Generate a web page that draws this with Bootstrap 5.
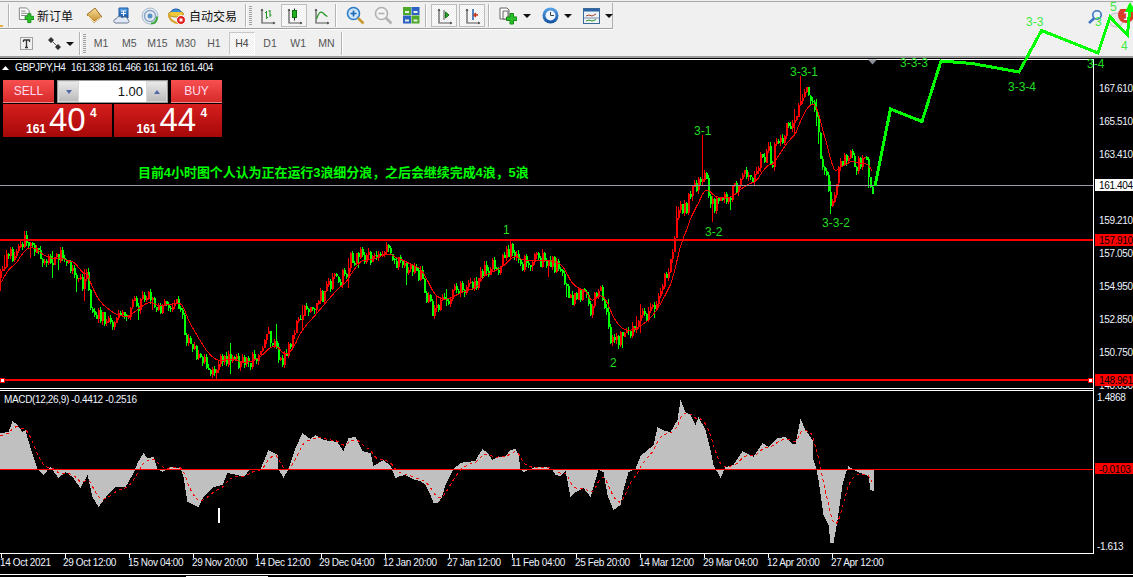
<!DOCTYPE html>
<html lang="zh">
<head>
<meta charset="utf-8">
<title>GBPJPY,H4</title>
<link href="https://cdn.jsdelivr.net/npm/bootstrap@5.3.0/dist/css/bootstrap.min.css" rel="stylesheet">
<style>
html,body{margin:0;width:1133px;height:577px;overflow:hidden;background:#f0f0f0;font-family:"Liberation Sans","Noto Sans CJK SC",sans-serif}
.mt-stage{width:1133px;height:577px;overflow:hidden}
.tb-one{height:29px;border-top:1px solid #a8a8a8;margin-top:1px;padding-top:1px}
.tb-one-in{width:613px;height:26px;border-bottom:1px solid #a0a0a0;border-right:1px solid #b0b0b0;box-shadow:0 1px 0 #fff}
.tb-two{height:28px;border-bottom:2px solid #9c9c9c;padding-top:1px}
.tb-sep{width:2px;height:23px;flex:none;background:#b4b4b4;border-right:1px solid #fff}
.tb-grip{width:3px;height:20px;flex:none;background:repeating-linear-gradient(#a0a0a0 0 1px,#f0f0f0 1px 2px);margin:0 1px 0 2px}
.tb-cell{height:25px;flex:none}
.w8{width:8px}.w28{width:28px}
.c-order{width:70px;padding-left:8px;gap:3px}
.c-auto{width:77px;gap:3px;padding-left:4px}
.c-t{width:47px;padding-left:6px}
.c-shape{width:32px;gap:4px}
.m-l2{margin-left:2px}.m-l3{margin-left:3px}
.c-indic{margin-left:9px;gap:6px}
.c-drop{margin-left:11px;gap:5px}
.c-right{width:46px;padding-top:6px;gap:5px}
.tb-on{width:26px;height:23px;flex:none;border:1px solid #c8c8c8;border-right-color:#fff;border-bottom-color:#fff;outline:1px solid #bdbdbd;outline-offset:-1px;background:repeating-conic-gradient(#fff 0 25%,#ececec 0 50%) 0 0/2px 2px}
.tb-txt{font-size:12px;color:#111;white-space:nowrap;font-family:"Noto Sans CJK SC",sans-serif;line-height:1}
.tb-caret{width:0;height:0;flex:none;border:4px solid transparent;border-top:4px solid #111;border-bottom:0}
.tf-cell{width:28.2px;height:26px;flex:none;font-size:10.5px;color:#555;text-align:center;line-height:24px}
.tf-on{width:26px;height:23px;flex:none;margin:0 1px;font-size:10.5px;color:#444;text-align:center;line-height:21px;border:1px solid #c8c8c8;border-right-color:#fff;border-bottom-color:#fff;background:repeating-conic-gradient(#fff 0 25%,#ececec 0 50%) 0 0/2px 2px}
.mt-chart{height:520px;background:#000;position:relative}
.mt-canvas{position:absolute;left:0;top:0;width:1133px;height:577px;z-index:2;pointer-events:none}
.mt-panel{position:absolute;left:3px;top:22px;width:219px;height:57px;z-index:3;color:#fff;font-family:"Liberation Sans",sans-serif}
.pn-row{display:flex;justify-content:space-between;height:24px}
.pn-head{width:51px;height:23px;background:linear-gradient(#f75050,#d82a2a);font-size:12px;text-align:center;line-height:22px;border-bottom:1px solid #f08888;color:#fde}
.pn-spin{width:111px;height:23px;background:#fff;border:1px solid #9a9a9a;display:flex;align-items:stretch;color:#111;font-size:13px}
.pn-arrow{width:21px;background:linear-gradient(#e8e8e8,#bcbcbc);border:1px solid #d8d8d8;display:flex;align-items:center;justify-content:center}
.pn-val{flex:1;text-align:right;padding-right:3px;line-height:21px;background:#fff}
.pn-tri-d{width:0;height:0;border:3px solid transparent;border-top:4px solid #5468a8;border-bottom:0}
.pn-tri-u{width:0;height:0;border:3px solid transparent;border-bottom:4px solid #5468a8;border-top:0}
.pn-prices{display:flex;gap:2px;height:33px}
.pn-price{flex:1;background:linear-gradient(#d61e1e,#a60808);position:relative;white-space:nowrap}
.pn-a{position:absolute;left:23px;bottom:2px;font-size:12px;font-weight:700;line-height:1}
.pn-b{position:absolute;left:46px;top:-1px;font-size:33px;line-height:34px}
.pn-c{position:absolute;left:87px;top:3px;font-size:12px;font-weight:700;line-height:1}
.ax{font:10px "Liberation Sans",sans-serif;letter-spacing:-.35px;fill:#eef4ff}
.axk{font:10px "Liberation Sans",sans-serif;letter-spacing:-.35px;fill:#000}
.wl{font:12px "Liberation Sans",sans-serif;fill:#22dd22}
.wl2{font:12px "Liberation Sans",sans-serif;fill:#3eea3e}
.cn{font:700 13px "Liberation Sans","Noto Sans CJK SC",sans-serif;letter-spacing:-.07px;fill:#00ff00}
</style>
</head>
<body>
<div class="mt-stage position-relative">
<svg width="0" height="0" class="position-absolute"><defs>
<linearGradient id="gGold" x1="0" y1="0" x2="0" y2="1"><stop offset="0" stop-color="#f8e09a"/><stop offset="1" stop-color="#c8902e"/></linearGradient>
<linearGradient id="gBlue" x1="0" y1="0" x2="0" y2="1"><stop offset="0" stop-color="#5aa4ea"/><stop offset="1" stop-color="#12509e"/></linearGradient>
<g id="axes"><path d="M4 2v14h13" fill="none" stroke="#555" stroke-width="1.2"/><path d="M2.500 4L4 1.500 5.500 4zM15 14.500l2.500 1.500-2.500 1.500z" fill="#555"/></g>
</defs></svg>

<!-- first toolbar -->
<div class="tb-one d-flex">
 <div class="tb-one-in d-flex align-items-center">
  <div class="tb-cell w8 d-flex align-items-end justify-content-start"><svg width="4" height="4"><rect y="1" width="3" height="2" fill="#e8b040"/></svg></div>
  <div class="tb-sep"></div>
  <div class="tb-cell c-order d-flex align-items-center">
   <svg width="16" height="17" viewBox="0 0 18 18"><path d="M1.500.5h8l3 3v10h-11z" fill="#fff" stroke="#777"/><path d="M3.500 4h5M3.500 6.500h7M3.500 9h7" stroke="#777"/><path d="M8 10h3V7h3.500v3H18v3.500h-3.500V17H11v-3.500H8z" fill="#2cc02c" stroke="#0f8a0f"/></svg>
   <span class="tb-txt">新订单</span>
  </div>
  <div class="tb-cell w28 d-flex align-items-center justify-content-center">
   <svg width="17" height="17" viewBox="0 0 17 17"><path d="M1 8L9 1l7 9-8 6z" fill="#a86c1a"/><path d="M1 7.500L9 1l6.500 8.500-8 5z" fill="url(#gGold)" stroke="#8a5a12" stroke-width=".8"/><path d="M2 9l6 6 7-5" fill="none" stroke="#fff0c0"/></svg>
  </div>
  <div class="tb-cell w28 d-flex align-items-center justify-content-center">
   <svg width="18" height="18" viewBox="0 0 18 18"><path d="M6 1h9v10H6z" fill="url(#gBlue)" stroke="#1a5aa0"/><path d="M8 4h5M8 6.500h5M10.500 4v5" stroke="#fff"/><path d="M3 16c-3 0-3-4 0-4 1-3 5-3 6-1 2-2 6-1 6 2 2 1 1 3-1 3z" fill="#dfe8f4" stroke="#6a7a90"/></svg>
  </div>
  <div class="tb-cell w28 d-flex align-items-center justify-content-center">
   <svg width="18" height="18" viewBox="0 0 18 18"><circle cx="9" cy="9" r="8" fill="#e6ebf2" stroke="#a8bcd0"/><circle cx="9" cy="9" r="5.500" fill="none" stroke="#8aa4c4" stroke-width="1.400"/><circle cx="9" cy="9" r="2.500" fill="#5a8ec4"/><path d="M10 16.500c4 0 6-3 6-7" fill="none" stroke="#3aa83a" stroke-width="2"/></svg>
  </div>
  <div class="tb-cell c-auto d-flex align-items-center">
   <svg width="18" height="18" viewBox="0 0 18 18"><ellipse cx="8" cy="7" rx="7.500" ry="3" fill="#f0c838" stroke="#b08a20"/><path d="M3 5c1-4 9-4 10 0" fill="#3c8cd8" stroke="#1c5ca0"/><path d="M1 8c0 5 6 8 9 8" fill="none" stroke="#d8a020" stroke-width="2"/><circle cx="13" cy="13" r="4.500" fill="#e02020" stroke="#fff"/><rect x="11.500" y="11.500" width="3" height="3" fill="#fff"/></svg>
   <span class="tb-txt">自动交易</span>
  </div>
  <div class="tb-sep ms-1"></div><div class="tb-grip"></div>
  <div class="tb-cell w28 d-flex align-items-center justify-content-center">
   <svg width="18" height="18" viewBox="0 0 18 18"><use href="#axes"/><path d="M8.500 4v8M7 5.500h1.500M8.500 10.500H10M12 3v7M10.500 4h1.500M12 8h1.500" stroke="#1f9a1f" fill="none"/></svg>
  </div>
  <div class="tb-on d-flex align-items-center justify-content-center">
   <svg width="18" height="18" viewBox="0 0 18 18"><use href="#axes"/><path d="M9.500 1.500v12" stroke="#222"/><rect x="7.500" y="3.500" width="4" height="7" fill="#22b022" stroke="#0c700c"/></svg>
  </div>
  <div class="tb-cell w28 d-flex align-items-center justify-content-center">
   <svg width="18" height="18" viewBox="0 0 18 18"><use href="#axes"/><path d="M4.500 12C6.500 6 8.500 4 10.500 5.500c1.500 1 2.500 3.500 5 4" fill="none" stroke="#1f9a1f" stroke-width="1.200"/></svg>
  </div>
  <div class="tb-sep"></div>
  <div class="tb-cell w28 d-flex align-items-center justify-content-center ms-1">
   <svg width="19" height="19" viewBox="0 0 19 19"><circle cx="7.500" cy="7.500" r="6" fill="#cfe6fa" stroke="#2b7cc8" stroke-width="1.600"/><path d="M4.500 7.500h6M7.500 4.500v6" stroke="#1565b0" stroke-width="1.600"/><path d="M12 12l5.500 5.500" stroke="#c89a30" stroke-width="2.600"/></svg>
  </div>
  <div class="tb-cell w28 d-flex align-items-center justify-content-center">
   <svg width="19" height="19" viewBox="0 0 19 19"><circle cx="7.500" cy="7.500" r="6" fill="#f4f4f4" stroke="#b0b0b0" stroke-width="1.600"/><path d="M4.500 7.500h6" stroke="#b0b0b0" stroke-width="1.600"/><path d="M12 12l5.500 5.500" stroke="#b4b4b4" stroke-width="2.600"/></svg>
  </div>
  <div class="tb-cell w28 d-flex align-items-center justify-content-center">
   <svg width="17" height="17" viewBox="0 0 17 17"><rect width="8" height="8" fill="#4ea82a"/><rect x="8.500" width="8" height="8" fill="#2d62c4"/><rect y="8.500" width="8" height="8" fill="#2d62c4"/><rect x="8.500" y="8.500" width="8" height="8" fill="#4ea82a"/><path d="M2 4h4v2H2zM10.500 4h4v2h-4zM2 12.500h4v2H2zM10.500 12.500h4v2h-4z" fill="#e6f2e6"/></svg>
  </div>
  <div class="tb-sep"></div>
  <div class="tb-on d-flex align-items-center justify-content-center ms-1">
   <svg width="18" height="18" viewBox="0 0 18 18"><use href="#axes"/><path d="M9 3v10" stroke="#555"/><path d="M10.500 5l3.500 3-3.500 3z" fill="#2aa82a" stroke="#127012"/></svg>
  </div>
  <div class="tb-on d-flex align-items-center justify-content-center m-l2">
   <svg width="18" height="18" viewBox="0 0 18 18"><use href="#axes"/><path d="M10 2v11" stroke="#1c5ca8" stroke-width="1.500"/><path d="M15 8h-3M13 6l-2 2 2 2" stroke="#c83214" fill="none" stroke-width="1.400"/></svg>
  </div>
  <div class="tb-sep m-l3"></div>
  <div class="d-flex align-items-center c-indic">
   <svg width="18" height="18" viewBox="0 0 18 18"><path d="M1 1h7l2 2v9H1z" fill="#fff" stroke="#666"/><path d="M4 4h5v8H4z" fill="#f4f4f4" stroke="#666"/><path d="M7.500 10h3.500V6.500h3.500V10H18v3.500h-3.500V17H11v-3.500H7.500z" fill="#2cc02c" stroke="#108a10"/></svg>
   <div class="tb-caret"></div>
  </div>
  <div class="d-flex align-items-center c-drop">
   <svg width="17" height="17" viewBox="0 0 17 17"><circle cx="8.500" cy="8.500" r="8" fill="url(#gBlue)"/><circle cx="8.500" cy="8.500" r="5" fill="#eef5fc"/><path d="M8.500 5v3.500H12" stroke="#444" fill="none"/></svg>
   <div class="tb-caret"></div>
  </div>
  <div class="d-flex align-items-center c-drop">
   <svg width="17" height="16" viewBox="0 0 17 16"><rect x=".5" y=".5" width="16" height="15" fill="#eaf2f8" stroke="#3a6a9a"/><rect x="1" y="1" width="15" height="2.500" fill="#2d62a4"/><path d="M3 8l3-1 3 1 4-2" stroke="#a8441c" fill="none"/><path d="M1 10h15" stroke="#88a"/><path d="M3 13l3-1 3 1 4-1.500" stroke="#2a9a2a" fill="none"/></svg>
   <div class="tb-caret"></div>
  </div>
 </div>
 <div class="ms-auto d-flex align-items-start c-right">
  <svg class="flex-shrink-0" width="16" height="16" viewBox="0 0 16 16"><circle cx="10" cy="6" r="4.200" fill="#eef5fc" stroke="#3a72c4" stroke-width="1.600"/><path d="M7 9.500L2 14" stroke="#3a72c4" stroke-width="2.400"/></svg>
  <svg class="flex-shrink-0" width="26" height="20" viewBox="0 0 26 20"><circle cx="8" cy="11" r="7" fill="#e8e8e8" stroke="#bbb"/><circle cx="18" cy="6" r="8" fill="#d83a28"/><text x="15.500" y="10.500" font-size="12" font-weight="700" fill="#fff" font-family="Liberation Sans">1</text></svg>
 </div>
</div>

<!-- second toolbar -->
<div class="tb-two d-flex align-items-center">
 <div class="tb-cell c-t d-flex align-items-center justify-content-center">
  <svg width="15" height="15" viewBox="0 0 15 15"><rect x="1.500" y="1.500" width="12" height="12" fill="none" stroke="#555" stroke-dasharray="1 1"/><path d="M4.500 4h6v2M7.500 4v7.500M6 11.500h3M4.500 4v2" fill="none" stroke="#333" stroke-width="1.300"/></svg>
 </div>
 <div class="tb-cell c-shape d-flex align-items-center">
  <svg width="15" height="15" viewBox="0 0 15 15"><path d="M1 4l3-3 3 3-3 3zM8 11l3-3 3 3-3 3z" fill="#333"/><path d="M5 5l5 5" stroke="#555"/></svg>
  <div class="tb-caret"></div>
 </div>
 <div class="tb-sep"></div><div class="tb-grip"></div>
 <div class="tf-cell">M1</div><div class="tf-cell">M5</div><div class="tf-cell">M15</div><div class="tf-cell">M30</div><div class="tf-cell">H1</div>
 <div class="tf-on">H4</div>
 <div class="tf-cell">D1</div><div class="tf-cell">W1</div><div class="tf-cell">MN</div>
 <div class="tb-sep"></div>
</div>

<!-- chart -->
<div class="mt-chart">
 <div class="mt-panel">
  <div class="pn-row">
   <div class="pn-head">SELL</div>
   <div class="pn-spin">
    <div class="pn-arrow"><div class="pn-tri-d"></div></div>
    <div class="pn-val">1.00</div>
    <div class="pn-arrow"><div class="pn-tri-u"></div></div>
   </div>
   <div class="pn-head">BUY</div>
  </div>
  <div class="pn-prices">
   <div class="pn-price"><span class="pn-a">161</span><span class="pn-b">40</span><span class="pn-c">4</span></div>
   <div class="pn-price"><span class="pn-a">161</span><span class="pn-b">44</span><span class="pn-c">4</span></div>
  </div>
 </div>
</div>
<svg id="cv" class="mt-canvas" viewBox="0 0 1133 577" xmlns="http://www.w3.org/2000/svg"></svg>
</div>

<script src="https://cdn.jsdelivr.net/npm/bootstrap@5.3.0/dist/js/bootstrap.bundle.min.js"></script>
<script>
const T=[[0,278],[5,255],[15,257],[20,240],[25,238],[30,245],[35,250],[40,262],[50,262],[60,256],[65,265],[72,263],[78,280],[83,285],[87,272],[90,310],[95,316],[105,316],[115,320],[125,318],[135,303],[143,298],[150,298],[155,312],[165,303],[178,302],[182,310],[185,340],[195,350],[205,365],[215,367],[222,360],[230,358],[240,365],[250,360],[260,350],[268,338],[275,345],[282,365],[290,345],[298,315],[310,310],[320,297],[335,280],[345,275],[348,265],[350,258],[360,250],[365,260],[375,255],[385,250],[390,255],[395,265],[400,262],[407,268],[415,270],[420,275],[425,295],[432,310],[440,305],[445,300],[455,290],[465,287],[475,285],[480,265],[490,268],[500,263],[510,248],[515,253],[520,265],[530,260],[540,260],[550,262],[560,268],[566,290],[570,300],[575,295],[585,295],[590,318],[597,285],[603,300],[610,335],[615,340],[625,335],[635,325],[645,315],[655,300],[665,275],[670,265],[675,227],[680,205],[685,210],[690,190],[695,190],[700,178],[703,170],[708,190],[712,205],[720,200],[730,195],[740,180],[755,178],[760,158],[768,155],[772,165],[775,145],[785,130],[795,125],[798,100],[805,90],[812,98],[815,110],[817,130],[822,170],[827,180],[830,200],[835,195],[838,160],[845,160],[850,155],[855,165],[860,165],[866,165],[869,175],[872,190]];
const M=[[0,433],[8,432],[12,421],[16,424],[22,432],[25,430],[27,438],[33,457],[37,469],[43,475],[50,467],[58,478],[65,472],[72,477],[80,488],[87,475],[92,497],[98,507],[107,495],[115,487],[125,487],[133,473],[137,463],[143,453],[147,458],[153,457],[157,469],[162,472],[170,467],[180,468],[183,477],[187,502],[198,507],[203,497],[213,487],[222,485],[227,473],[237,475],[243,477],[250,469],[260,469],[268,450],[277,455],[278,469],[283,478],[288,469],[295,448],[302,433],[310,439],[315,435],[323,440],[337,442],[343,451],[348,438],[355,437],[362,451],[370,453],[373,466],[383,460],[390,466],[395,478],[400,476],[405,475],[410,478],[415,480],[420,481],[425,485],[430,495],[433,503],[437,503],[441,498],[445,485],[450,475],[453,469],[460,463],[465,462],[475,461],[478,455],[482,449],[487,453],[492,460],[497,457],[505,456],[510,450],[515,449],[518,455],[520,469],[523,472],[528,470],[535,467],[545,467],[552,470],[555,475],[560,476],[565,471],[570,497],[575,492],[583,488],[590,497],[595,480],[598,470],[603,472],[607,495],[613,510],[620,505],[623,490],[628,472],[635,469],[640,456],[647,450],[653,445],[657,427],[662,430],[670,432],[677,420],[680,400],[685,412],[690,415],[695,425],[698,417],[705,430],[710,450],[713,465],[720,478],[725,467],[733,465],[742,451],[753,457],[762,443],[768,447],[777,438],[785,437],[792,444],[795,444],[800,419],[805,430],[812,440],[813,460],[816,469],[818,480],[823,515],[828,525],[830,543],[833,543],[837,520],[842,485],[845,474],[848,466],[852,469],[860,473],[868,476],[870,490],[873,491]];
function ip(P,x){for(let i=1;i<P.length;i++){if(x<=P[i][0]){const a=P[i-1],b=P[i];return a[1]+(b[1]-a[1])*(x-a[0])/(b[0]-a[0]);}}return P[P.length-1][1];}
let s=12345;function R(){s=(s*1664525+1013904223)>>>0;return s/4294967296;}
const spec={510:[240,0],216:[0,381],702:[135,0],800:[76,0],830:[0,214],712:[0,222],276:[324,0]};
let up='',dn='',prev=ip(T,0),ema=prev+6,ma=[];
for(let x=0;x<=872;x+=2){
  const c0=ip(T,x);let c=c0+(R()-.5)*15,o=prev;
  if(Math.abs(o-c)<2)c+=R()<.5?3:-3;
  const t=Math.min(o,c),b=Math.max(o,c);
  const big=R()<.12?9:0;
  let hi=t-R()*4-(R()<.5?big:0),lo=b+R()*4+(R()<.5?big:0);
  if(spec[x]){if(spec[x][0])hi=spec[x][0];if(spec[x][1])lo=spec[x][1];}
  const seg=`M${x} ${Math.round(t)}h2v${Math.max(1,Math.round(b-t))}h-2zM${x} ${Math.round(hi)}h1v${Math.round(lo-hi)}h-1z`;
  if(c<o)up+=seg;else dn+=seg;
  prev=c;ema+=(c0-ema)*.16;ma.push(x+','+ema.toFixed(1));
}
let hist='',sig=[],e2=ip(M,0)+4;
for(let x=0;x<=873;x+=1){
  const v=ip(M,x);
  if(x%2==0){e2+=(v-e2)*.24;sig.push(x+','+e2.toFixed(1));}
  const t=Math.min(v,469),h=Math.abs(v-469);
  hist+=`M${x} ${Math.round(t)}h1v${Math.round(h)}h-1z`;
}
const q=[];
const ln=(x1,y1,x2,y2,c,w)=>q.push(`<line x1="${x1}" y1="${y1}" x2="${x2}" y2="${y2}" stroke="${c}" stroke-width="${w||1}" shape-rendering="crispEdges"/>`);
const tx=(x,y,t,c,a)=>q.push(`<text x="${x}" y="${y}" class="${c}"${a?` text-anchor="${a}"`:''}>${t}</text>`);
// candles
q.push(`<path d="${dn}" fill="#00ff00" shape-rendering="crispEdges"/>`);
q.push(`<path d="${up}" fill="#ff0000" shape-rendering="crispEdges"/>`);
q.push(`<polyline points="${ma.join(' ')}" fill="none" stroke="#ff0000" stroke-width="1" shape-rendering="crispEdges"/>`);
// frames
ln(0,59.5,1093,59.5,'#fff');ln(1093.5,59,1093.5,553,'#fff');ln(0,388.5,1093,388.5,'#fff');ln(0,390.5,1093,390.5,'#fff');ln(0,553.5,1094,553.5,'#fff');ln(0,574.5,1133,574.5,'#fff');ln(186,576.5,268,576.5,'#fff',2);
// price lines
ln(0,185.5,1093,185.5,'#9a9aa8');ln(0,240,1093,240,'#ff0000',2);ln(0,380,1093,380,'#ff0000',2);
q.push('<rect x="0.500" y="378.500" width="4" height="4" fill="#fff" stroke="#f00"/><rect x="1088.500" y="378.500" width="4" height="4" fill="#fff" stroke="#f00"/>');
q.push('<path d="M868 59.500h9l-4.500 5z" fill="#8a8f9a"/>');
// macd
q.push(`<path d="${hist}" fill="#c0c0c0" shape-rendering="crispEdges"/>`);
q.push(`<polyline points="${sig.join(' ')}" fill="none" stroke="#ff0000" stroke-width="1" stroke-dasharray="3 3" shape-rendering="crispEdges"/>`);
ln(0,469.5,1093,469.5,'#ff0000');
q.push('<rect x="218" y="508" width="2" height="15" fill="#fff"/>');
// axis
[['167.610',92],['165.510',125],['163.410',158],['159.210',224],['157.050',257],['154.950',290],['152.850',323],['150.750',356],['148.650',388.500]].forEach(a=>tx(1099,a[1],a[0],'ax'));
q.push('<rect x="1095" y="179" width="38" height="12" fill="#fff"/>');tx(1099,189,'161.404','axk');
q.push('<rect x="1095" y="234" width="38" height="12" fill="#ff0000"/>');tx(1099,244,'157.910','axk');
q.push('<rect x="1095" y="374" width="38" height="12" fill="#ff0000"/>');tx(1099,384,'148.961','axk');
q.push('<rect x="1095" y="463" width="38" height="11" fill="#ff0000"/>');tx(1099,472.500,'-0.0103','axk');
tx(1097,401,'1.4868','ax');tx(1097,550,'-1.613','ax');
// time
[[1,0,'14 Oct 2021'],[65,63,'29 Oct 12:00'],[129,128,'15 Nov 04:00'],[193,192,'29 Nov 20:00'],[257,255,'14 Dec 12:00'],[321,319,'29 Dec 04:00'],[385,383,'12 Jan 20:00'],[449,447,'27 Jan 12:00'],[512,511,'11 Feb 04:00'],[576,575,'25 Feb 20:00'],[640,639,'14 Mar 12:00'],[704,703,'29 Mar 04:00'],[768,767,'12 Apr 20:00'],[832,831,'27 Apr 12:00']].forEach(a=>{ln(a[0]+.5,553,a[0]+.5,558,'#fff');tx(a[1],566,a[2],'ax');});
// head texts
q.push('<path d="M2 70l3.500-4 3.500 4z" fill="#fff"/>');
tx(15,71,'GBPJPY,H4','ax');tx(71,71,'161.338 161.466 161.162 161.404','ax');
tx(4,403,'MACD(12,26,9) -0.4412 -0.2516','ax');
// annotation
tx(138,176.500,'目前4小时图个人认为正在运行3浪细分浪，之后会继续完成4浪，5浪','cn');
// wave
q.push('<polyline points="875,186 890.500,109 922,121.500 941,61 972,63.500 1019,72 1041.500,30.500 1098,53 1110,17 1127.500,35 1130,5" fill="none" stroke="#00ff00" stroke-width="3" stroke-linejoin="miter" shape-rendering="crispEdges"/>');
q.push('<path d="M1125 12l5-10 3 5v5z" fill="#00ff00"/>');
[[694,134.500,'3-1'],[705,235.500,'3-2'],[790,75.500,'3-3-1'],[822,226.500,'3-3-2'],[503,233.500,'1'],[610,366.500,'2'],[900,67,'3-3-3'],[1008,91,'3-3-4'],[1087,67.500,'3-4']].forEach(a=>tx(a[0],a[1],a[2],'wl'));
[[1026,25.500,'3-3'],[1095,26,'3'],[1110,10.500,'5'],[1121,50,'4']].forEach(a=>tx(a[0],a[1],a[2],'wl2'));
document.getElementById('cv').innerHTML=q.join('');
</script>
</body>
</html>
